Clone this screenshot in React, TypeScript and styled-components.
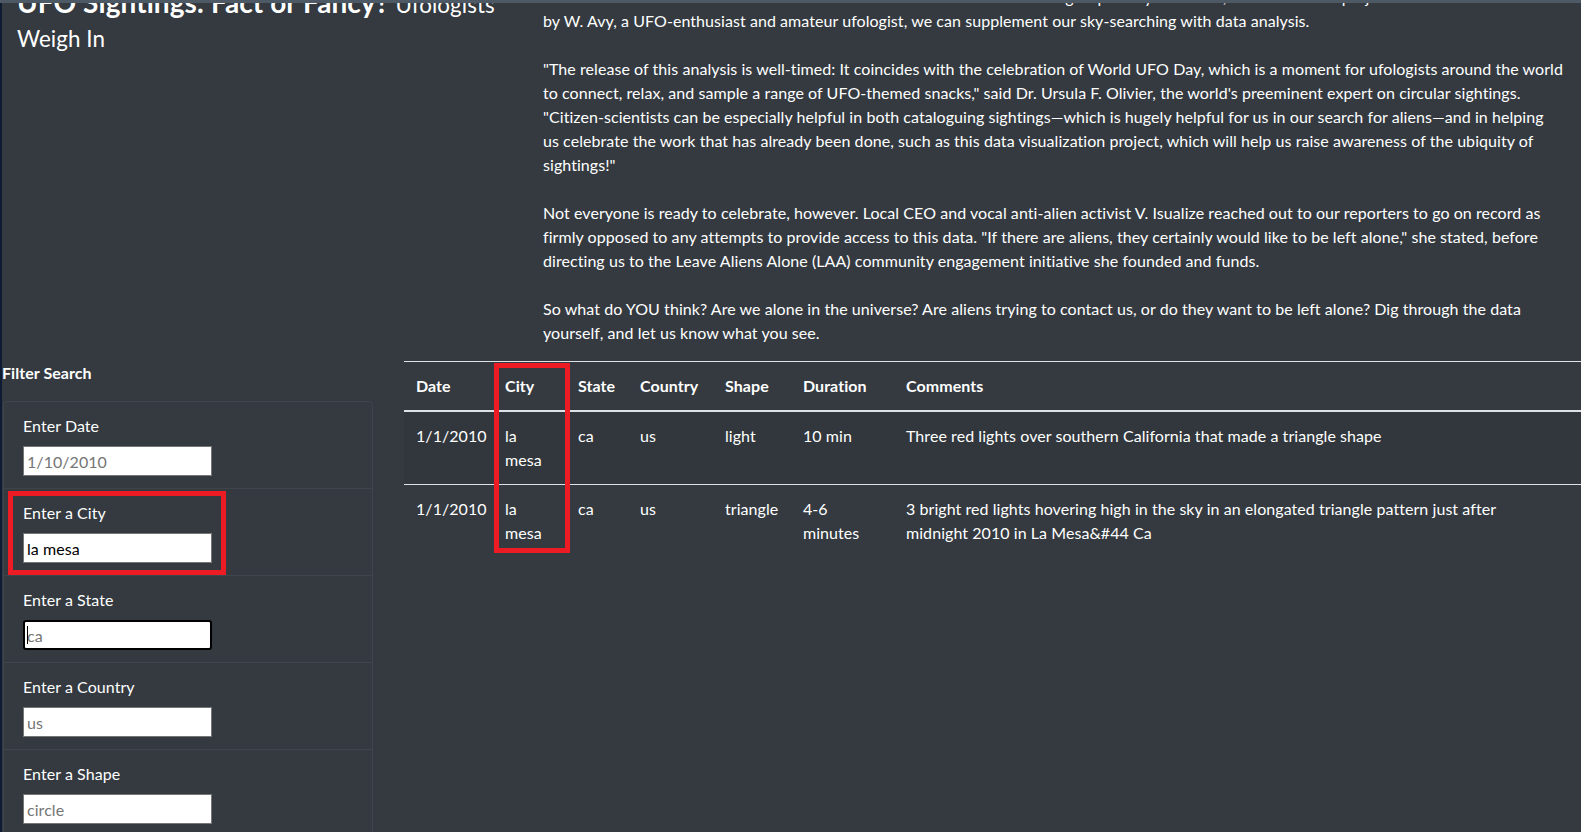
import React from "react";
import styled, { createGlobalStyle } from "styled-components";

const GlobalStyle = createGlobalStyle`
  html, body { margin: 0; padding: 0; overflow: hidden; }
  body {
    background: #343a40;
    color: #ffffff;
    font-family: Lato, "Noto Sans", "Liberation Sans", sans-serif;
    font-size: 16px;
    line-height: 1.5;
    letter-spacing: 0.06px;
  }
  * { box-sizing: border-box; }
`;

const Page = styled.div`
  display: flex;
  flex-direction: column;
  width: 1581px;
  height: 832px;
  overflow: hidden;
  background: #343a40;
`;

const TopBar = styled.div`
  flex: 0 0 3px;
  background: #4d5a66;
`;

const Viewport = styled.div`
  flex: 1;
  overflow: hidden;
  border-left: 2px solid #0e1c33;
`;

const Content = styled.div`
  margin-top: -18px;
`;

const HeroRow = styled.div`
  display: flex;
`;

const TitleCol = styled.div`
  flex: 0 0 525px;
  padding: 1px 15px 0;
`;

const Title = styled.h3`
  margin: 0;
  font-size: 28px;
  font-weight: 700;
  line-height: 1.2;
  color: #ffffff;
`;

const Subtitle = styled.small`
  font-size: 22.4px;
  font-weight: 400;
`;

const ArticleCol = styled.div`
  flex: 1;
  padding: 0 15px 0 16px;
`;

const Para = styled.p`
  margin: 0 0 24px;
  &:last-child { margin-bottom: 16px; }
`;

const DataRow = styled.div`
  display: flex;
  gap: 31px;
  padding-left: 1px;
`;

const FilterCol = styled.div`
  flex: 0 0 370px;
`;

const FilterHeading = styled.div`
  font-weight: 700;
  line-height: 24px;
  margin: 0 0 16px -1px;
`;

const FilterCard = styled.ul`
  list-style: none;
  margin: 0;
  padding: 0;
  border: 1px solid #3f454c;
  border-radius: 4px;
`;

const FilterItem = styled.li`
  position: relative;
  padding: 12px 19px;
  & + & { border-top: 1px solid #3f454c; }
`;

const FieldLabel = styled.label`
  display: block;
  line-height: 24px;
  margin-bottom: 8px;
  color: #ffffff;
`;

const InputWrap = styled.div`
  position: relative;
  width: 189px;
  height: 30px;
`;

const FieldInput = styled.input<{ $focused?: boolean }>`
  display: block;
  width: 189px;
  height: 30px;
  margin: 0;
  padding: 1px ${(p) => (p.$focused ? "2px" : "3px")};
  font-family: inherit;
  font-size: 16px;
  letter-spacing: 0.06px;
  color: #000000;
  background: #ffffff;
  border: ${(p) => (p.$focused ? "2px solid #000000" : "1px solid #767676")};
  border-radius: ${(p) => (p.$focused ? "3px" : "0")};
  outline: none;
  &::placeholder { color: #757575; opacity: 1; }
`;

const Caret = styled.span`
  position: absolute;
  left: 4px;
  top: 6px;
  width: 1px;
  height: 18px;
  background: #000000;
`;

const Highlight = styled.div<{ $left: number; $top: number; $w: number; $h: number }>`
  position: absolute;
  left: ${(p) => p.$left}px;
  top: ${(p) => p.$top}px;
  width: ${(p) => p.$w}px;
  height: ${(p) => p.$h}px;
  border: 5px solid #ed1c24;
  pointer-events: none;
`;

const TableCol = styled.div`
  flex: 1;
  position: relative;
`;

const Table = styled.table`
  width: 100%;
  border-collapse: collapse;
  table-layout: fixed;
  color: #ffffff;
`;

const HeadCell = styled.th<{ $w?: number }>`
  width: ${(p) => (p.$w ? `${p.$w}px` : "auto")};
  padding: 12px;
  text-align: left;
  font-weight: 700;
  vertical-align: bottom;
  border-top: 1px solid #dee2e6;
  border-bottom: 2px solid #dee2e6;
  line-height: 24px;
`;

const BodyRow = styled.tr`
  &:nth-of-type(odd) { background: rgba(0, 0, 0, 0.05); }
`;

const Cell = styled.td<{ $nowrap?: boolean; $wide?: boolean }>`
  padding: ${(p) => (p.$wide ? "12px 40px 12px 12px" : "12px")};
  vertical-align: top;
  border-top: 1px solid #dee2e6;
  line-height: 24px;
  white-space: ${(p) => (p.$nowrap ? "nowrap" : "normal")};
`;

const columns = [
  { key: "datetime", label: "Date", w: 89, nowrap: true },
  { key: "city", label: "City", w: 73, nowrap: false },
  { key: "state", label: "State", w: 62, nowrap: true },
  { key: "country", label: "Country", w: 85, nowrap: true },
  { key: "shape", label: "Shape", w: 78, nowrap: true },
  { key: "duration", label: "Duration", w: 103, nowrap: false },
  { key: "comments", label: "Comments", w: 0, nowrap: false },
] as const;

type Row = Record<(typeof columns)[number]["key"], string>;

const rows: Row[] = [
  {
    datetime: "1/1/2010",
    city: "la mesa",
    state: "ca",
    country: "us",
    shape: "light",
    duration: "10 min",
    comments: "Three red lights over southern California that made a triangle shape",
  },
  {
    datetime: "1/1/2010",
    city: "la mesa",
    state: "ca",
    country: "us",
    shape: "triangle",
    duration: "4-6 minutes",
    comments:
      "3 bright red lights hovering high in the sky in an elongated triangle pattern just after midnight 2010 in La Mesa&#44 Ca",
  },
];

const filters = [
  { id: "datetime", label: "Enter Date", placeholder: "1/10/2010", value: "" },
  { id: "city", label: "Enter a City", placeholder: "los angeles", value: "la mesa" },
  { id: "state", label: "Enter a State", placeholder: "ca", value: "" },
  { id: "country", label: "Enter a Country", placeholder: "us", value: "" },
  { id: "shape", label: "Enter a Shape", placeholder: "circle", value: "" },
];

export default function App() {
  return (
    <>
      <GlobalStyle />
      <Page>
        <TopBar />
        <Viewport>
          <Content>
            <HeroRow>
              <TitleCol>
                <Title>
                  UFO Sightings: Fact or Fancy? <Subtitle>Ufologists<br />Weigh In</Subtitle>
                </Title>
              </TitleCol>
              <ArticleCol>
                <Para>
                  Are we alone in the universe? Thanks to the tireless efforts of a dedicated group of sky-watchers, and a new data project
                  <br />
                  by W. Avy, a UFO-enthusiast and amateur ufologist, we can supplement our sky-searching with data analysis.
                </Para>
                <Para>
                  "The release of this analysis is well-timed: It coincides with the celebration of World UFO Day, which is a moment for ufologists around the world
                  <br />
                  to connect, relax, and sample a range of UFO-themed snacks," said Dr. Ursula F. Olivier, the world's preeminent expert on circular sightings.
                  <br />
                  "Citizen-scientists can be especially helpful in both cataloguing sightings—which is hugely helpful for us in our search for aliens—and in helping
                  <br />
                  us celebrate the work that has already been done, such as this data visualization project, which will help us raise awareness of the ubiquity of
                  <br />
                  sightings!"
                </Para>
                <Para>
                  Not everyone is ready to celebrate, however. Local CEO and vocal anti-alien activist V. Isualize reached out to our reporters to go on record as
                  <br />
                  firmly opposed to any attempts to provide access to this data. "If there are aliens, they certainly would like to be left alone," she stated, before
                  <br />
                  directing us to the Leave Aliens Alone (LAA) community engagement initiative she founded and funds.
                </Para>
                <Para>
                  So what do YOU think? Are we alone in the universe? Are aliens trying to contact us, or do they want to be left alone? Dig through the data
                  <br />
                  yourself, and let us know what you see.
                </Para>
              </ArticleCol>
            </HeroRow>

            <DataRow>
              <FilterCol>
                <FilterHeading>Filter Search</FilterHeading>
                <FilterCard>
                  {filters.map((f) => (
                    <FilterItem key={f.id}>
                      <FieldLabel htmlFor={f.id}>{f.label}</FieldLabel>
                      {f.id === "state" ? (
                        <InputWrap>
                          <FieldInput id={f.id} type="text" placeholder={f.placeholder} $focused readOnly />
                          <Caret />
                        </InputWrap>
                      ) : (
                        <FieldInput
                          id={f.id}
                          type="text"
                          placeholder={f.placeholder}
                          defaultValue={f.value}
                        />
                      )}
                      {f.id === "city" && <Highlight $left={4} $top={2} $w={218} $h={84} />}
                    </FilterItem>
                  ))}
                </FilterCard>
              </FilterCol>

              <TableCol>
                <Table>
                  <thead>
                    <tr>
                      {columns.map((c) => (
                        <HeadCell key={c.key} $w={c.w || undefined}>
                          {c.label}
                        </HeadCell>
                      ))}
                    </tr>
                  </thead>
                  <tbody>
                    {rows.map((r, i) => (
                      <BodyRow key={i}>
                        {columns.map((c) => (
                          <Cell key={c.key} $nowrap={c.nowrap} $wide={c.key === "comments"}>
                            {r[c.key]}
                          </Cell>
                        ))}
                      </BodyRow>
                    ))}
                  </tbody>
                </Table>
                <Highlight $left={90} $top={2} $w={76} $h={190} />
              </TableCol>
            </DataRow>
          </Content>
        </Viewport>
      </Page>
    </>
  );
}
